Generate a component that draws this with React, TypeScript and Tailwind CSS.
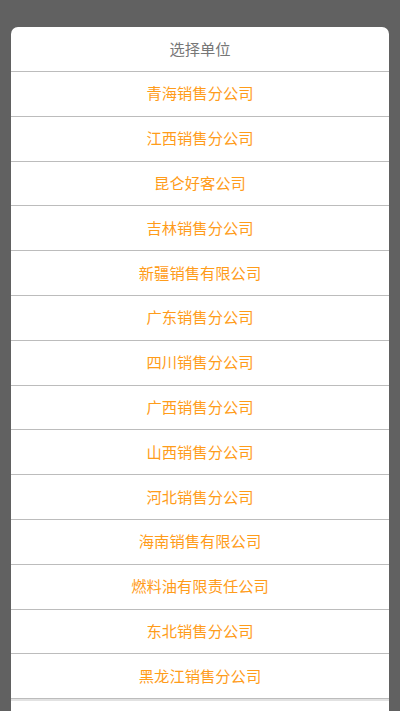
const units = [
  "青海销售分公司",
  "江西销售分公司",
  "昆仑好客公司",
  "吉林销售分公司",
  "新疆销售有限公司",
  "广东销售分公司",
  "四川销售分公司",
  "广西销售分公司",
  "山西销售分公司",
  "河北销售分公司",
  "海南销售有限公司",
  "燃料油有限责任公司",
  "东北销售分公司",
  "黑龙江销售分公司",
];

export default function App() {
  return (
    <div
      className="h-[711px] overflow-hidden bg-[#616161] px-[11px] pt-[27px]"
      style={{ fontFamily: '"Noto Sans CJK SC", "Noto Sans", sans-serif' }}
    >
      <div className="overflow-hidden rounded-t-[7px] bg-white">
        <div className="flex h-[45px] items-center justify-center border-b border-[#bcbcbc] pb-[2px] text-[15.3px] text-[#777777]">
          选择单位
        </div>
        {units.map((name) => (
          <div
            key={name}
            className="flex h-[44.8px] items-center justify-center border-b border-[#bcbcbc] pb-[2px] text-[15.3px] text-[#ff9c1a]"
          >
            {name}
          </div>
        ))}
        <div className="h-[2px] bg-[#e2e2e2]" />
        <div className="h-[60px] bg-white" />
      </div>
    </div>
  );
}
